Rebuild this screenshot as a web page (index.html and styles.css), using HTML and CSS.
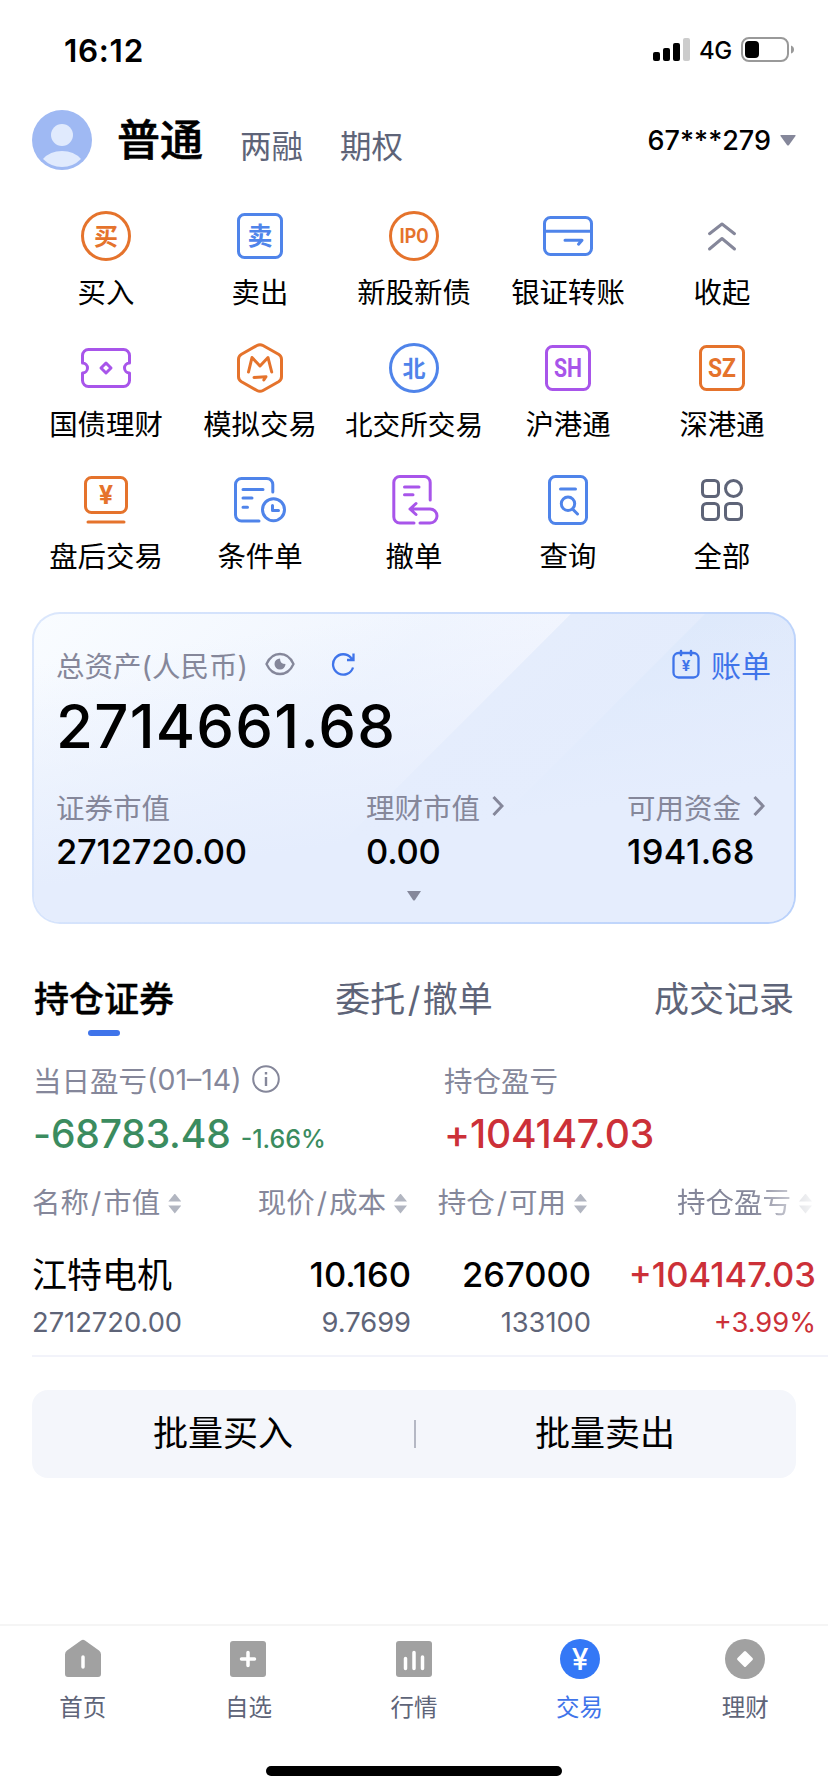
FILE: index.html
```html
<!DOCTYPE html>
<html lang="zh-CN">
<head>
  <meta charset="UTF-8">
  <title>交易</title>
  <link rel="stylesheet" href="styles.css">
</head>
<body>
<div id="status">
  <span class="time">16:12</span>
  <svg class="signal" width="38" height="24" viewBox="0 0 38 24"><rect x="0" y="14" width="7" height="9" rx="2"/><rect x="10" y="10" width="7" height="13" rx="2"/><rect x="20" y="5" width="7" height="18" rx="2"/><rect x="30" y="0" width="7" height="23" rx="2" fill="#ccc"/></svg>
  <span class="net">4G</span>
  <svg class="battery" width="54" height="26" viewBox="0 0 54 26"><rect x="1" y="1" width="46" height="23" rx="7" fill="none" stroke="#999" stroke-width="2"/><rect x="4" y="4" width="14" height="17" rx="4"/><path d="M50 8.5q3 1 3 4t-3 4z" fill="#999"/></svg>
</div>

<div id="hd">
  <svg class="avatar" width="60" height="60" viewBox="0 0 60 60"><circle cx="30" cy="30" r="30" fill="#9fb9f3"/><circle cx="30" cy="25" r="11" fill="#e0eafd"/><path d="M11 49q7-8 19-8t19 8q-8 8-19 8t-19-8z" fill="#e0eafd"/></svg>
  <h1>普通</h1>
  <a class="type">两融</a>
  <a class="type">期权</a>
  <span class="account">67***279</span>
  <svg class="drop" width="16" height="11" viewBox="0 0 16 11"><path d="M1 0h14q1 0 .5 1L9 10q-1 1-2 0L.5 1Q0 0 1 0z" fill="#85879a"/></svg>
</div>

<ul id="menu">
  <li><svg class="ico orange" viewBox="-30 -30 60 60"><circle r="23.5"/><text y="8.5" font-size="24">买</text></svg>买入</li>
  <li><svg class="ico blue" viewBox="-30 -30 60 60"><rect x="-21.5" y="-21.5" width="43" height="43" rx="6"/><text y="9" font-size="25">卖</text></svg>卖出</li>
  <li><svg class="ico orange" viewBox="-30 -30 60 60"><circle r="23.5"/><text class="en" y="7.3" font-size="20.5" textLength="29" lengthAdjust="spacingAndGlyphs">IPO</text></svg>新股新债</li>
  <li><svg class="ico blue" viewBox="-30 -30 60 60"><rect x="-23.5" y="-18.5" width="47" height="37" rx="6"/><path d="M-23.5-4.700h47M-3 4.200h17l-3.500 4"/></svg>银证转账</li>
  <li><svg class="ico gray" viewBox="-30 -30 60 60"><path d="M-12.500-2.300L0-12 12.500-2.300M-12.500 13L0 2.500 12.500 13"/></svg>收起</li>
  <li><svg class="ico purple" viewBox="-30 -30 60 60"><path d="M-23.500-5v-7.500a6 6 0 0 1 6-6h35a6 6 0 0 1 6 6V-5a5 5 0 0 0 0 10v7.500a6 6 0 0 1-6 6h-35a6 6 0 0 1-6-6V5a5 5 0 0 0 0-10zM0-5l5 5-5 5-5-5z"/></svg>国债理财</li>
  <li><svg class="ico orange" viewBox="-30 -30 60 60"><path d="M-3-22.500q3-1.700 6 0l15.500 8.700q3 1.800 3 5V8.800q0 3.200-3 5L3 22.500q-3 1.700-6 0l-15.500-8.700q-3-1.800-3-5V-8.800q0-3.200 3-5z"/><path d="M-11.500 4L-8-10.500l8 8.500 8-8.500L11.700 4M-6 9.500L6 8.700 3.800 12"/></svg>模拟交易</li>
  <li class="long"><svg class="ico blue" viewBox="-30 -30 60 60"><circle r="23.500"/><text y="8.500" font-size="23">北</text></svg>北交所交易</li>
  <li><svg class="ico purple" viewBox="-30 -30 60 60"><rect x="-21.500" y="-21.500" width="43" height="43" rx="6"/><text class="en" y="9" font-size="25" textLength="28" lengthAdjust="spacingAndGlyphs">SH</text></svg>沪港通</li>
  <li><svg class="ico orange" viewBox="-30 -30 60 60"><rect x="-21.500" y="-21.500" width="43" height="43" rx="6"/><text class="en" y="9" font-size="25" textLength="28" lengthAdjust="spacingAndGlyphs">SZ</text></svg>深港通</li>
  <li><svg class="ico orange" viewBox="-30 -30 60 60"><rect x="-20.500" y="-22.500" width="41" height="35" rx="6"/><path d="M-18 22h36"/><text class="en" y="4" font-size="26">¥</text></svg>盘后交易</li>
  <li><svg class="ico blue" viewBox="-30 -30 60 60"><path d="M12.800-8v-7.500a6 6 0 0 0-6-6h-25.300a6 6 0 0 0-6 6V15a6 6 0 0 0 6 6H-1M-17-10.500H3M-17-2h9M-17 7.300h4.500"/><circle cx="13.500" cy="9.700" r="11"/><path d="M12.500 5.500v5h6"/></svg>条件单</li>
  <li><svg class="ico purple" viewBox="-30 -30 60 60"><path d="M16.200 0v-17.500a6 6 0 0 0-6-6h-24.400a6 6 0 0 0-6 6V17a6 6 0 0 0 6 6H0M-9.500-13H5M-9.500-5.300H-1M2 3.500L-4 9l6 5.500M-4 9h20a7 7 0 0 1 0 14H6"/></svg>撤单</li>
  <li><svg class="ico blue" viewBox="-30 -30 60 60"><rect x="-18.500" y="-23.500" width="37" height="47" rx="6"/><path d="M-7.500-11h15M4.500 9l5 5"/><circle cy="3.700" r="6.700"/></svg>查询</li>
  <li><svg class="ico dark" viewBox="-30 -30 60 60"><rect x="-19.500" y="-19.500" width="16" height="16" rx="4"/><circle cx="11.500" cy="-11.500" r="8"/><rect x="-19.500" y="3.500" width="16" height="16" rx="4"/><rect x="3.500" y="3.500" width="16" height="16" rx="4"/></svg>全部</li>
</ul>

<div id="assets">
  <div class="top">
    <span>总资产(人民币)</span>
    <svg class="eye" width="30" height="24" viewBox="0 0 30 24"><path d="M1.500 12Q6 2 15 2t13.500 10Q24 22 15 22T1.500 12z" fill="none" stroke="#85879a" stroke-width="2.300"/><path d="M15 6.500a5.500 5.500 0 1 0 5.500 5.500q-5.500 0-5.500-5.500z" fill="#85879a"/></svg>
    <svg class="reload" width="24" height="24" viewBox="0 0 24 24"><path d="M22 15.500A10.200 10.200 0 1 1 20 5.800L22 8M22.500 1.500V8H16" fill="none" stroke="#3f74ea" stroke-width="2.300"/></svg>
    <a class="bill"><svg width="28" height="30" viewBox="0 0 28 30"><rect x="1.500" y="4" width="25" height="24.500" rx="5" fill="none" stroke="#3f74ea" stroke-width="2.300"/><path d="M9 2v4M19 2v4" stroke="#3f74ea" stroke-width="2.500" stroke-linecap="round"/><text x="14" y="21.500" font-size="15">¥</text></svg>账单</a>
  </div>
  <div class="total">2714661.68</div>
  <div class="parts">
    <dl><dt>证券市值</dt><dd>2712720.00</dd></dl>
    <dl><dt>理财市值<svg class="more" width="12" height="22" viewBox="0 0 12 22"><path d="M1.500 2l8.500 9-8.500 9"/></svg></dt><dd>0.00</dd></dl>
    <dl><dt>可用资金<svg class="more" width="12" height="22" viewBox="0 0 12 22"><path d="M1.500 2l8.500 9-8.500 9"/></svg></dt><dd class="cash">1941.68</dd></dl>
  </div>
  <svg class="fold" width="14" height="10" viewBox="0 0 14 10"><path d="M0 0h14L8 9q-1 1-2 0z" fill="#85879a"/></svg>
</div>

<div id="tabs">
  <a class="on">持仓证券</a>
  <a>委托<i>/</i>撤单</a>
  <a>成交记录</a>
</div>

<div id="profit">
  <div class="day">
    <h3>当日盈亏<span>(01–14)</span><svg width="28" height="28" viewBox="0 0 28 28"><circle cx="14" cy="14" r="12.800" fill="none" stroke="#85879a" stroke-width="2"/><path d="M14 12v9M14 7v2.500" stroke="#85879a" stroke-width="2.400"/></svg></h3>
    <p class="down"><b>-68783.48</b><small>-1.66%</small></p>
  </div>
  <div class="hold">
    <h3>持仓盈亏</h3>
    <p class="up"><b>+104147.03</b></p>
  </div>
</div>

<table id="stocks">
  <thead>
    <tr>
      <th class="c1">名称<i>/</i>市值<i class="sort"></i></th>
      <th class="c2">现价<i>/</i>成本<i class="sort"></i></th>
      <th class="c3">持仓<i>/</i>可用<i class="sort"></i></th>
      <th class="c4">持仓盈亏<i class="sort"></i></th>
    </tr>
  </thead>
  <tbody>
    <tr>
      <td><b class="name">江特电机</b><span>2712720.00</span></td>
      <td><b>10.160</b><span>9.7699</span></td>
      <td><b>267000</b><span>133100</span></td>
      <td class="up"><b>+104147.03</b><span>+3.99%</span></td>
    </tr>
  </tbody>
</table>

<div id="batch"><a>批量买入</a><a>批量卖出</a></div>

<div id="nav">
  <a><svg width="40" height="40" viewBox="0 0 40 40"><path d="M18 1.500q2-1.500 4 0l14 10q2 1.500 2 4V35q0 3-3 3H5q-3 0-3-3V15.500q0-2.500 2-4z"/><path class="w" d="M20 18v10"/></svg>首页</a>
  <a><svg width="40" height="40" viewBox="0 0 40 40"><rect x="2" y="2" width="36" height="36" rx="3"/><path class="w" d="M20 13.500v13M13.500 20h13"/></svg>自选</a>
  <a><svg width="40" height="40" viewBox="0 0 40 40"><rect x="2" y="2" width="36" height="36" rx="3"/><path class="w" d="M11.500 19.500v10M20 13.500v16M28.500 18v11.500"/></svg>行情</a>
  <a class="on"><svg width="40" height="40" viewBox="0 0 40 40"><circle cx="20" cy="20" r="20"/><text x="20" y="31" font-size="30">¥</text></svg>交易</a>
  <a><svg width="40" height="40" viewBox="0 0 40 40"><circle cx="20" cy="20" r="20"/><path fill="#fff" d="M19 12.500q1-1 2 0l6.500 6.500q1 1 0 2L21 27.500q-1 1-2 0L12.500 21q-1-1 0-2z"/></svg>理财</a>
</div>
<div id="home"></div>
</body>
</html>
```
FILE: styles.css
```css
*{margin:0;padding:0;box-sizing:border-box;}
body{
  width:828px;
  height:1792px;
  overflow:hidden;
  background:#fff;
  color:#000;
  font-family:Inter,"Noto Sans CJK SC",sans-serif;
  font-size:28px;
  font-weight:400;
}
svg{display:block;flex:none;}
ul{list-style:none;}
i{font-style:normal;}

#status{display:flex;align-items:center;height:100px;padding:0 33px 0 64px;}
.time{flex:1;font-size:31.5px;font-weight:600;letter-spacing:.7px;}
.net{width:32px;margin:0 10px 0 8px;font-size:24px;font-weight:500;letter-spacing:-.5px;white-space:nowrap;}

#hd{display:flex;align-items:center;height:80px;padding:0 32px;}
h1{margin-left:25px;font-size:43px;font-weight:500;line-height:60px;-webkit-text-stroke:.6px #000;}
.type{margin:14px 0 0 37px;color:#5e6478;font-size:31.5px;line-height:46px;}
.account{margin-left:auto;font-size:27px;font-weight:500;}
.drop{margin-left:9px;}

#menu{display:grid;grid-template-columns:repeat(5,154px);grid-auto-rows:132px;padding:26px 29px 0;height:432px;}
#menu li{display:flex;flex-direction:column;align-items:center;font-size:28.4px;line-height:42px;white-space:nowrap;}
#menu .long{font-size:27.6px;}
.ico{width:60px;height:60px;margin-bottom:6px;fill:none;stroke:currentColor;stroke-width:3;stroke-linecap:round;stroke-linejoin:round;}
.ico text{fill:currentColor;stroke:none;text-anchor:middle;font-family:"Noto Sans CJK SC",sans-serif;font-weight:700;}
.ico .en{font-family:Roboto,sans-serif;}
.orange{color:#e5732c;}
.blue{color:#4f84ea;}
.purple{color:#a855ea;}
.gray{color:#85879a;}
.dark{color:#5e6478;}

#assets{
  width:764px;
  height:312px;
  margin:0 32px;
  padding:28px 23px 0 22px;
  border:2px solid transparent;
  border-radius:28px;
  background:
    linear-gradient(172deg,rgba(230,237,253,0) 12%,#e5edfd 66%) padding-box,
    linear-gradient(135deg,#f9fcff 0,#f0f5fe 290px,#f3f6fe 379px,#e5edfc 380px,#e4ecfc 474px,#dce8fb 475px,#e0e9fb 620px) padding-box,
    linear-gradient(110deg,#dbe7fc,#b9d1fb) border-box;
}
.top{display:flex;align-items:center;height:44px;color:#85879a;}
.top span{width:209px;font-size:28.5px;white-space:nowrap;}
.reload{margin-left:36px;}
.bill{display:flex;align-items:center;gap:11px;margin-left:auto;color:#3f74ea;font-size:30px;}
.bill text{fill:#3f74ea;text-anchor:middle;font-weight:700;}
.total{height:78px;line-height:80px;font-size:60px;font-weight:500;letter-spacing:1.2px;}
.parts{display:grid;grid-template-columns:310px 261px 1fr;margin-top:20px;}
dt{display:flex;align-items:center;height:44px;color:#85879a;font-size:28.5px;}
.more{margin-left:12px;fill:none;stroke:#85879a;stroke-width:3;}
dd{height:47px;line-height:48px;font-size:34.5px;font-weight:500;letter-spacing:-.2px;}
.cash{letter-spacing:.4px;}
.fold{margin:16px auto 0;}

#tabs{display:flex;justify-content:space-between;height:126px;padding:49px 34px 0;color:#5e6478;font-size:35px;line-height:52px;}
#tabs i{padding:0 2.500px;}
#tabs .on{color:#000;font-weight:500;-webkit-text-stroke:.4px #000;}
#tabs .on:after{content:"";display:block;width:32px;height:6px;margin:5px auto 0;border-radius:3px;background:#3f74ea;}

#profit{display:grid;grid-template-columns:411px 1fr;height:118px;padding:7px 33px 0;}
h3{display:flex;align-items:center;height:44px;color:#85879a;font-size:28.5px;font-weight:400;}
h3 svg{margin-left:10px;}
#profit p{display:flex;align-items:baseline;height:64px;line-height:66px;}
#profit b{font-size:39px;font-weight:500;letter-spacing:-.15px;}
#profit small{margin-left:10px;font-size:25px;font-weight:500;}
.down{color:#3b8c5f;}
.up{color:#cc3038;}

#stocks{width:796px;margin-left:32px;border-collapse:collapse;table-layout:fixed;border-bottom:2px solid #f2f3fa;}
th,td{text-align:right;white-space:nowrap;}
th:first-child,td:first-child{text-align:left;}
.c1{width:199px;}
.c2{width:180px;}
.c3{width:180px;}
th{height:64px;color:#85879a;font-size:28.5px;font-weight:400;}
th i:not(.sort){padding:0 2px;}
.c2,.c3{padding-right:4px;}
.c4{padding-right:16px;-webkit-mask-image:linear-gradient(90deg,#000 68%,transparent 98%);mask-image:linear-gradient(90deg,#000 68%,transparent 98%);}
td{height:124px;padding-top:6px;}
td:last-child{padding-right:12px;}
td b{display:block;height:52px;line-height:52px;font-size:34.5px;font-weight:500;}
td .name{font-size:35px;font-weight:400;}
td span{display:block;height:44px;line-height:44px;color:#5e6478;font-size:27.3px;}
.up span{color:#cc3038;}
.sort{display:inline-block;width:13px;height:20px;margin-left:8px;vertical-align:-1px;background:#b2b6c1;clip-path:polygon(50% 0,100% 40%,0 40%,0 60%,100% 60%,50% 100%,0 60%,0 40%);}

#batch{display:flex;height:88px;margin:33px 32px 0;border-radius:16px;background:#f4f6fb;}
#batch a{flex:1;text-align:center;line-height:87px;font-size:35px;}
#batch a + a{background:linear-gradient(#b5b8c4,#b5b8c4) 0 30px/2px 28px no-repeat;}

#nav{display:flex;height:140px;margin-top:146px;border-top:2px solid #f5f5f5;}
#nav a{flex:1;display:flex;flex-direction:column;align-items:center;padding-top:13px;color:#5e6478;font-size:23.5px;line-height:36px;}
#nav svg{margin-bottom:11px;fill:#a1a1a1;}
#nav .w{fill:none;stroke:#fff;stroke-width:3.500;stroke-linecap:round;}
#nav .on{color:#3f74ea;}
#nav .on svg{fill:#3478f6;}
#nav text{fill:#fff;text-anchor:middle;font-weight:500;}
#home{width:296px;height:10px;margin:2px auto 0;border-radius:5px;background:#000;}
```
